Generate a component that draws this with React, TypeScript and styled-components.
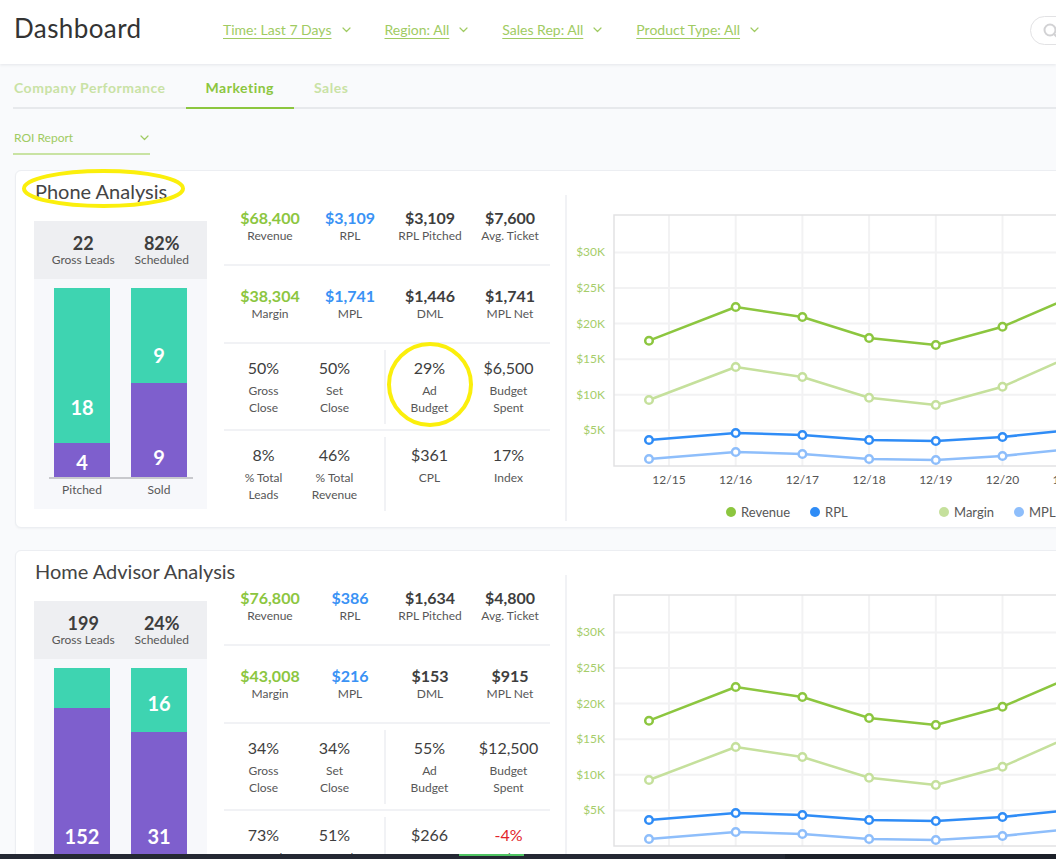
import React from "react";
import styled, { createGlobalStyle } from "styled-components";

const C = {
  bg: "#f9fafc",
  green: "#8cc63f",
  greenSoft: "#a0cb62",
  greenPale: "#c9e2a5",
  blue: "#3a92f5",
  blueSoft: "#8ebefb",
  marginGreen: "#c5e09c",
  red: "#e2232b",
  text: "#3e3e3e",
  label: "#575757",
  teal: "#3ed4b1",
  purple: "#7e5fcd",
  line: "#f1f2f5",
};

const GlobalStyle = createGlobalStyle`
  html, body { margin: 0; padding: 0; }
  body {
    background: ${C.bg};
    font-family: Lato, "Open Sans", "Liberation Sans", Arial, sans-serif;
    overflow: hidden;
    -webkit-font-smoothing: antialiased;
  }
  #root { width: 1056px; height: 859px; overflow: hidden; position: relative; }
  * { box-sizing: border-box; }
`;

/* ---------- header ---------- */
const Header = styled.header`
  position: relative;
  z-index: 2;
  height: 64px;
  display: flex;
  align-items: flex-start;
  padding-left: 14px;
  background: #fff;
  box-shadow: 0 1px 3px rgba(20, 30, 50, 0.09);
  overflow: hidden;
`;
const PageTitle = styled.h1`
  flex: 0 0 209px;
  margin: 13px 0 0;
  font-size: 26px;
  line-height: 30px;
  font-weight: 400;
  letter-spacing: 0.4px;
  color: #333;
`;
const Filters = styled.nav`
  display: flex;
  gap: 34px;
  margin-top: 21px;
`;
const Filter = styled.button`
  display: flex;
  align-items: center;
  gap: 10px;
  padding: 0;
  border: 0;
  background: none;
  font: inherit;
  font-size: 14px;
  line-height: 18px;
  color: ${C.greenSoft};
  cursor: pointer;
`;
const FilterText = styled.span`
  text-decoration: underline;
  text-decoration-thickness: 1px;
  text-underline-offset: 3px;
`;
const SearchPill = styled.div`
  margin: 16px -160px 0 auto;
  width: 186px;
  height: 29px;
  border: 1px solid #e2e2e4;
  border-radius: 15px;
  display: flex;
  align-items: center;
  padding-left: 12px;
`;

const Chevron = ({ color }: { color: string }) => (
  <svg width="9" height="6" viewBox="0 0 9 6" fill="none">
    <path d="M1 1 L4.5 4.5 L8 1" stroke={color} strokeWidth="1.2" strokeLinecap="round" strokeLinejoin="round" />
  </svg>
);

/* ---------- tabs ---------- */
const Main = styled.main`
  padding-left: 13px;
`;
const TabBar = styled.div`
  display: flex;
  border-bottom: 2px solid #e7e9ec;
`;
const Tab = styled.div<{ $active?: boolean }>`
  padding: 16px 20px 11px;
  margin-bottom: -2px;
  font-size: 14px;
  line-height: 16px;
  font-weight: 700;
  letter-spacing: 0.5px;
  color: ${(p) => (p.$active ? C.green : C.greenPale)};
  border-bottom: 2px solid ${(p) => (p.$active ? C.green : "transparent")};
  &:first-child {
    padding-left: 1px;
  }
`;
const Select = styled.div`
  margin-top: 20px;
  width: 137px;
  display: flex;
  align-items: center;
  justify-content: space-between;
  padding: 0 1px 6px 1px;
  border-bottom: 2px solid #c9e3a3;
  font-size: 12px;
  line-height: 18px;
  color: ${C.greenSoft};
`;

/* ---------- card ---------- */
const Card = styled.section`
  position: relative;
  display: flex;
  align-items: flex-start;
  width: 1100px;
  margin: 15px 0 0 2px;
  padding: 0 0 0 18px;
  background: #fff;
  border: 1px solid #eceef2;
  border-radius: 6px;
  box-shadow: 0 1px 2px rgba(30, 40, 60, 0.04);
  & + & {
    margin-top: 22px;
  }
`;
const LeftCol = styled.div`
  flex: 0 0 173px;
  min-width: 0;
  padding: 7px 0 18px;
`;
const CardTitle = styled.h2`
  margin: 0 0 17px 1px;
  font-size: 20px;
  line-height: 26px;
  font-weight: 400;
  color: #444;
  white-space: nowrap;
`;
const Panel = styled.div`
  width: 173px;
  background: #f7f8fb;
`;
const PanelHead = styled.div`
  display: grid;
  grid-template-columns: 1fr 1fr;
  padding: 12px 6px 12px 10px;
  background: #eeeff2;
`;
const HeadStat = styled.div`
  display: flex;
  flex-direction: column;
  align-items: center;
`;
const HeadValue = styled.div`
  font-size: 18px;
  line-height: 20px;
  font-weight: 700;
  color: ${C.text};
`;
const HeadLabel = styled.div`
  font-size: 12px;
  line-height: 14px;
  color: ${C.label};
`;
const PanelBody = styled.div`
  padding: 9px 0 10px 15px;
`;
const Bars = styled.div`
  width: 144px;
  height: 191px;
  display: flex;
  align-items: flex-end;
  gap: 21px;
  padding: 0 6px 0 5px;
  border-bottom: 2px solid #c8c9cd;
`;
const Bar = styled.div`
  width: 56px;
  display: flex;
  flex-direction: column;
`;
const Segment = styled.div<{ $color: string; $pb: number }>`
  display: flex;
  flex-direction: column;
  justify-content: flex-end;
  align-items: center;
  padding-bottom: ${(p) => p.$pb}px;
  background: ${(p) => p.$color};
  color: #fff;
  font-size: 20px;
  line-height: 20px;
  font-weight: 700;
  overflow: hidden;
`;
const BarLabels = styled.div`
  width: 144px;
  display: grid;
  grid-template-columns: 56px 56px;
  gap: 21px;
  padding: 0 6px 0 5px;
  margin-top: 2px;
  font-size: 12px;
  line-height: 18px;
  color: ${C.label};
  text-align: center;
`;

/* ---------- stats ---------- */
const Stats = styled.div`
  flex: 0 0 324px;
  margin: 17px 0 0 17px;
`;
const MoneyRow = styled.div`
  height: 78px;
  display: grid;
  grid-template-columns: repeat(4, 80px);
  align-items: center;
  padding-left: 6px;
  &:first-child {
    height: 76px;
  }
  & + & {
    border-top: 2px solid ${C.line};
  }
`;
const RatioRow = styled.div`
  height: 87px;
  display: flex;
  border-top: 2px solid ${C.line};
`;
const Half = styled.div<{ $right?: boolean }>`
  display: grid;
  grid-template-columns: 1fr 1fr;
  align-items: start;
  width: ${(p) => (p.$right ? 164 : 160)}px;
  margin: 6px 0 5px;
  padding: ${(p) => (p.$right ? "0 0 0 4px" : "0 14px 0 4px")};
  border-left: ${(p) => (p.$right ? `2px solid ${C.line}` : "0")};
`;
const Cell = styled.div<{ $ratio?: boolean }>`
  display: flex;
  flex-direction: column;
  align-items: center;
  padding-top: ${(p) => (p.$ratio ? 8 : 0)}px;
  text-align: center;
`;
const toneColor = (t?: string) =>
  t === "green" ? C.green : t === "blue" ? C.blue : t === "red" ? C.red : C.text;
const Value = styled.div<{ $tone?: string; $bold?: boolean }>`
  font-size: 16px;
  line-height: 20px;
  font-weight: ${(p) => (p.$bold ? 700 : 400)};
  color: ${(p) => toneColor(p.$tone)};
  white-space: nowrap;
`;
const LabelBlock = styled.div<{ $ratio?: boolean }>`
  margin-top: ${(p) => (p.$ratio ? 4 : 0)}px;
  font-size: 12px;
  line-height: ${(p) => (p.$ratio ? 17 : 16)}px;
  color: ${C.label};
  white-space: nowrap;
`;

/* ---------- chart ---------- */
const ChartCol = styled.div`
  flex: 0 0 500px;
  margin: 24px 0 0 15px;
  border-left: 2px solid ${C.line};
`;
const ChartSvg = styled.svg`
  display: block;
  font-family: Lato, "Open Sans", "Liberation Sans", Arial, sans-serif;
`;
const Legend = styled.div`
  display: grid;
  grid-template-columns: 84px 129px 75px 80px;
  padding-left: 159px;
  margin-top: 8px;
  font-size: 13px;
  line-height: 18px;
  color: ${C.label};
`;
const LegendItem = styled.div`
  display: flex;
  align-items: center;
  gap: 5px;
`;
const Dot = styled.span<{ $color: string }>`
  width: 10px;
  height: 10px;
  border-radius: 50%;
  background: ${(p) => p.$color};
`;

const Annotation = styled.svg<{ $left: number; $top: number }>`
  position: absolute;
  left: ${(p) => p.$left}px;
  top: ${(p) => p.$top}px;
  pointer-events: none;
  overflow: visible;
`;

const BottomBar = styled.div`
  position: fixed;
  left: 0;
  bottom: 0;
  width: 1056px;
  height: 5px;
  z-index: 5;
  background: linear-gradient(to right, #242833 0 785px, #1c2029 785px);
`;
const BottomMark = styled.div`
  position: absolute;
  left: 459px;
  top: 0;
  width: 65px;
  height: 2px;
  background: #4fc463;
`;

/* ---------- data ---------- */
type Seg = { value: number; color: string; label?: string; pb: number };
type Stat = { value: string; label: string[]; tone?: string };
type Analysis = {
  title: string;
  leads: string;
  scheduled: string;
  pitched: Seg[];
  sold: Seg[];
  money: Stat[][];
  ratios: Stat[][];
  annotate?: boolean;
};

const analyses: Analysis[] = [
  {
    title: "Phone Analysis",
    leads: "22",
    scheduled: "82%",
    pitched: [
      { value: 18, color: C.teal, label: "18", pb: 26 },
      { value: 4, color: C.purple, label: "4", pb: 5 },
    ],
    sold: [
      { value: 9, color: C.teal, label: "9", pb: 18 },
      { value: 9, color: C.purple, label: "9", pb: 10 },
    ],
    money: [
      [
        { value: "$68,400", label: ["Revenue"], tone: "green" },
        { value: "$3,109", label: ["RPL"], tone: "blue" },
        { value: "$3,109", label: ["RPL Pitched"] },
        { value: "$7,600", label: ["Avg. Ticket"] },
      ],
      [
        { value: "$38,304", label: ["Margin"], tone: "green" },
        { value: "$1,741", label: ["MPL"], tone: "blue" },
        { value: "$1,446", label: ["DML"] },
        { value: "$1,741", label: ["MPL Net"] },
      ],
    ],
    ratios: [
      [
        { value: "50%", label: ["Gross", "Close"] },
        { value: "50%", label: ["Set", "Close"] },
        { value: "29%", label: ["Ad", "Budget"] },
        { value: "$6,500", label: ["Budget", "Spent"] },
      ],
      [
        { value: "8%", label: ["% Total", "Leads"] },
        { value: "46%", label: ["% Total", "Revenue"] },
        { value: "$361", label: ["CPL"] },
        { value: "17%", label: ["Index"] },
      ],
    ],
    annotate: true,
  },
  {
    title: "Home Advisor Analysis",
    leads: "199",
    scheduled: "24%",
    pitched: [
      { value: 41, color: C.teal, pb: 0 },
      { value: 152, color: C.purple, label: "152", pb: 11 },
    ],
    sold: [
      { value: 16, color: C.teal, label: "16", pb: 19 },
      { value: 31, color: C.purple, label: "31", pb: 11 },
    ],
    money: [
      [
        { value: "$76,800", label: ["Revenue"], tone: "green" },
        { value: "$386", label: ["RPL"], tone: "blue" },
        { value: "$1,634", label: ["RPL Pitched"] },
        { value: "$4,800", label: ["Avg. Ticket"] },
      ],
      [
        { value: "$43,008", label: ["Margin"], tone: "green" },
        { value: "$216", label: ["MPL"], tone: "blue" },
        { value: "$153", label: ["DML"] },
        { value: "$915", label: ["MPL Net"] },
      ],
    ],
    ratios: [
      [
        { value: "34%", label: ["Gross", "Close"] },
        { value: "34%", label: ["Set", "Close"] },
        { value: "55%", label: ["Ad", "Budget"] },
        { value: "$12,500", label: ["Budget", "Spent"] },
      ],
      [
        { value: "73%", label: ["% Total", "Leads"] },
        { value: "51%", label: ["% Total", "Revenue"] },
        { value: "$266", label: ["CPL"] },
        { value: "-4%", label: ["Index"], tone: "red" },
      ],
    ],
  },
];

const BAR_H = 189;
const PTS_X = [82, 168.7, 235.4, 302.1, 368.8, 435.5, 502.2];
const GRID_X = [102, 168.7, 235.4, 302.1, 368.8, 435.5, 502.2];
const DATES = ["12/15", "12/16", "12/17", "12/18", "12/19", "12/20", "12/21"];
const Y_TICKS = [
  { label: "$30K", y: 57.4 },
  { label: "$25K", y: 93 },
  { label: "$20K", y: 128.6 },
  { label: "$15K", y: 164.2 },
  { label: "$10K", y: 199.8 },
  { label: "$5K", y: 235.4 },
];
const SERIES = [
  { name: "Margin", color: C.marginGreen, ys: [205, 172, 182, 202.7, 210, 191.7, 162] },
  { name: "MPL", color: C.blueSoft, ys: [264, 257, 259, 264, 265, 261, 254] },
  { name: "RPL", color: "#2f8cf6", ys: [245, 238, 240, 245, 246, 242, 235] },
  { name: "Revenue", color: C.green, ys: [145.7, 112, 122, 143, 150, 131.7, 103] },
];
const LEGEND = [
  { name: "Revenue", color: C.green },
  { name: "RPL", color: "#2f8cf6" },
  { name: "Margin", color: C.marginGreen },
  { name: "MPL", color: C.blueSoft },
];

const StackBar = ({ segs }: { segs: Seg[] }) => {
  const total = segs.reduce((s, x) => s + x.value, 0);
  return (
    <Bar>
      {segs.map((s, i) => (
        <Segment key={i} $color={s.color} $pb={s.pb} style={{ height: (s.value / total) * BAR_H }}>
          {s.label}
        </Segment>
      ))}
    </Bar>
  );
};

const Chart = () => (
  <ChartCol>
    <ChartSvg width="500" height="300" viewBox="0 0 500 300">
      {Y_TICKS.map((t) => (
        <g key={t.label}>
          <line x1="47" x2="500" y1={t.y} y2={t.y} stroke="#f2f2f3" strokeWidth="2" />
          <text x="38" y={t.y + 4} textAnchor="end" fontSize="12" fill="#a6cd6a">
            {t.label}
          </text>
        </g>
      ))}
      {GRID_X.map((x, i) => (
        <g key={x}>
          <line x1={x} x2={x} y1="20" y2="271" stroke="#f2f2f3" strokeWidth="2" />
          <text x={x} y="289" textAnchor="middle" fontSize="12" fill="#555">
            {DATES[i]}
          </text>
        </g>
      ))}
      <rect x="47" y="20" width="470" height="251" fill="none" stroke="#e2e2e4" strokeWidth="1.5" />
      {SERIES.map((s) => (
        <g key={s.name}>
          <polyline
            points={s.ys.map((y, i) => `${PTS_X[i]},${y}`).join(" ")}
            fill="none"
            stroke={s.color}
            strokeWidth="2.5"
            strokeLinejoin="round"
          />
          {s.ys.map((y, i) => (
            <circle key={i} cx={PTS_X[i]} cy={y} r="3.8" fill="#fff" stroke={s.color} strokeWidth="2.5" />
          ))}
        </g>
      ))}
    </ChartSvg>
    <Legend>
      {LEGEND.map((l) => (
        <LegendItem key={l.name}>
          <Dot $color={l.color} />
          {l.name}
        </LegendItem>
      ))}
    </Legend>
  </ChartCol>
);

const StatCell = ({ s, ratio }: { s: Stat; ratio?: boolean }) => (
  <Cell $ratio={ratio}>
    <Value $tone={s.tone} $bold={!ratio}>
      {s.value}
    </Value>
    <LabelBlock $ratio={ratio}>
      {s.label.map((l) => (
        <div key={l}>{l}</div>
      ))}
    </LabelBlock>
  </Cell>
);

const AnalysisCard = ({ a }: { a: Analysis }) => (
  <Card>
    <LeftCol>
      <CardTitle>{a.title}</CardTitle>
      <Panel>
        <PanelHead>
          <HeadStat>
            <HeadValue>{a.leads}</HeadValue>
            <HeadLabel>Gross Leads</HeadLabel>
          </HeadStat>
          <HeadStat>
            <HeadValue>{a.scheduled}</HeadValue>
            <HeadLabel>Scheduled</HeadLabel>
          </HeadStat>
        </PanelHead>
        <PanelBody>
          <Bars>
            <StackBar segs={a.pitched} />
            <StackBar segs={a.sold} />
          </Bars>
          <BarLabels>
            <span>Pitched</span>
            <span>Sold</span>
          </BarLabels>
        </PanelBody>
      </Panel>
    </LeftCol>
    <Stats>
      {a.money.map((row, i) => (
        <MoneyRow key={i}>
          {row.map((s, j) => (
            <StatCell key={j} s={s} />
          ))}
        </MoneyRow>
      ))}
      {a.ratios.map((row, i) => (
        <RatioRow key={i}>
          <Half>
            <StatCell s={row[0]} ratio />
            <StatCell s={row[1]} ratio />
          </Half>
          <Half $right>
            <StatCell s={row[2]} ratio />
            <StatCell s={row[3]} ratio />
          </Half>
        </RatioRow>
      ))}
    </Stats>
    <Chart />
    {a.annotate && (
      <>
        <Annotation $left={6} $top={-2} width="163" height="39" viewBox="0 0 163 39">
          <ellipse cx="81.5" cy="19.5" rx="79.5" ry="17.5" fill="none" stroke="#fbef0c" strokeWidth="4" />
        </Annotation>
        <Annotation $left={371} $top={171} width="86" height="85" viewBox="0 0 86 85">
          <ellipse cx="43" cy="42.5" rx="41" ry="40.5" fill="none" stroke="#fbef0c" strokeWidth="4" />
        </Annotation>
      </>
    )}
  </Card>
);

const FILTERS = ["Time: Last 7 Days", "Region: All", "Sales Rep: All", "Product Type: All"];

export default function App() {
  return (
    <>
      <GlobalStyle />
      <Header>
        <PageTitle>Dashboard</PageTitle>
        <Filters>
          {FILTERS.map((f) => (
            <Filter key={f}>
              <FilterText>{f}</FilterText>
              <Chevron color={C.greenSoft} />
            </Filter>
          ))}
        </Filters>
        <SearchPill>
          <svg width="16" height="16" viewBox="0 0 16 16" fill="none">
            <circle cx="7" cy="7" r="5.5" stroke="#d2d2d4" strokeWidth="2" />
            <path d="M11 11 L15 15" stroke="#d2d2d4" strokeWidth="2" strokeLinecap="round" />
          </svg>
        </SearchPill>
      </Header>
      <Main>
        <TabBar>
          <Tab>Company Performance</Tab>
          <Tab $active>Marketing</Tab>
          <Tab>Sales</Tab>
        </TabBar>
        <Select>
          <span>ROI Report</span>
          <Chevron color={C.greenSoft} />
        </Select>
        {analyses.map((a) => (
          <AnalysisCard key={a.title} a={a} />
        ))}
      </Main>
      <BottomBar>
        <BottomMark />
      </BottomBar>
    </>
  );
}
